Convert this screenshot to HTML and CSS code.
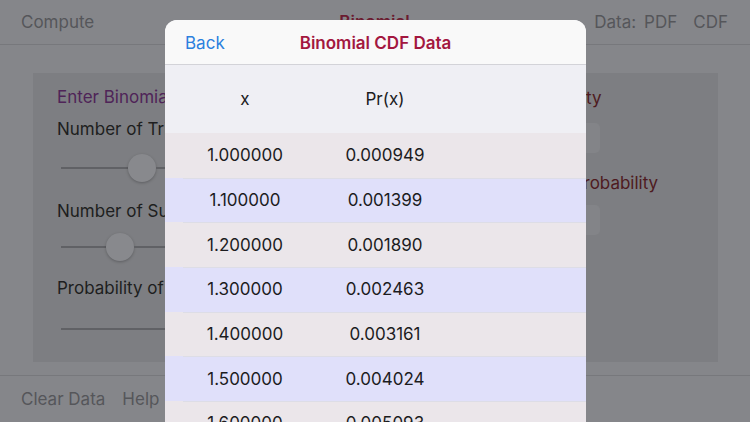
FILE: index.html
```html
<!DOCTYPE html>
<html>
<head>
<link rel="stylesheet" href="styles.css">
</head>
<body>

<div class="app">
  <div class="topbar">
    <div class="bar-left">Compute</div>
    <div class="bar-title">Binomial</div>
    <div class="bar-right"><span>Data:</span><span>PDF</span><span>CDF</span></div>
  </div>

  <div class="main">
    <div class="panel">
      <div class="col-left">
        <div class="heading">Enter Binomial Parameters</div>
        <div class="label first">Number of Trials</div>
        <div class="slider s1">
          <div class="track left"></div><div class="thumb"></div><div class="track"></div>
        </div>
        <div class="label second">Number of Successes</div>
        <div class="slider s2">
          <div class="track left"></div><div class="thumb"></div><div class="track"></div>
        </div>
        <div class="label third">Probability of Success</div>
        <div class="slider s3">
          <div class="track left"></div>
        </div>
      </div>
      <div class="col-right">
        <div class="out-label">PDF Probability</div>
        <div class="out-box first"></div>
        <div class="out-label">Cumulative Probability</div>
        <div class="out-box second"></div>
      </div>
    </div>
  </div>

  <div class="bottombar">
    <span>Clear Data</span>
    <span>Help</span>
  </div>
</div>

<div class="modal">
  <div class="modal-head">
    <div class="back">Back</div>
    <div class="modal-title">Binomial CDF Data</div>
  </div>
  <div class="table-head">
    <div class="cell">x</div>
    <div class="cell">Pr(x)</div>
  </div>
  <div class="rows">
    <div class="row"><div class="cell">1.000000</div><div class="cell">0.000949</div></div>
    <div class="row"><div class="cell">1.100000</div><div class="cell">0.001399</div></div>
    <div class="row"><div class="cell">1.200000</div><div class="cell">0.001890</div></div>
    <div class="row"><div class="cell">1.300000</div><div class="cell">0.002463</div></div>
    <div class="row"><div class="cell">1.400000</div><div class="cell">0.003161</div></div>
    <div class="row"><div class="cell">1.500000</div><div class="cell">0.004024</div></div>
    <div class="row"><div class="cell">1.600000</div><div class="cell">0.005093</div></div>
  </div>
</div>

</body>
</html>
```

FILE: styles.css
```css
body {
  margin: 0;
  width: 750px;
  height: 422px;
  overflow: hidden;
  background-color: #85868a;
  font-family: Inter, "Noto Sans", sans-serif;
  font-size: 17px;
  position: relative;
}

.app {
  display: flex;
  flex-direction: column;
  height: 422px;
}

/* top bar */
.topbar {
  height: 44px;
  border-bottom: 1px solid #77787c;
  display: grid;
  grid-template-columns: 1fr auto 1fr;
  align-items: center;
  padding: 0 22px 0 21px;
  color: #55565a;
}

.bar-title {
  color: #6b1c30;
  font-weight: 600;
}

.bar-right {
  display: flex;
  justify-content: flex-end;
  gap: 8px;
}

.bar-right span + span + span {
  margin-left: 8px;
}

/* panel */
.main {
  padding: 28px 32px 0 33px;
}

.panel {
  height: 289px;
  background-color: #7d7e82;
  display: flex;
}

.col-left {
  width: 445px;
  flex: none;
  padding: 13px 0 0 24px;
  box-sizing: border-box;
  color: #1e1e20;
}

.heading {
  color: #4f2458;
  line-height: 22px;
}

.label {
  line-height: 22px;
}

.label.first { margin-top: 10px; }
.label.second { margin-top: 17px; }
.label.third { margin-top: 15px; }

.slider {
  height: 30px;
  display: flex;
  align-items: center;
  margin-left: 4px;
  margin-top: 13px;
}

.s2 { margin-top: 10px; }
.s3 { margin-top: 15px; }

.track {
  height: 2px;
  background-color: #606165;
  flex: 1;
}

.s1 .track.left { flex: none; width: 67px; }
.s2 .track.left { flex: none; width: 45px; }

.thumb {
  width: 28px;
  height: 28px;
  border-radius: 50%;
  background-color: #88898d;
  box-shadow: 0 1px 3px rgba(0, 0, 0, 0.25);
}

.col-right {
  padding-top: 14px;
  color: #4e1a20;
}

.out-label {
  line-height: 22px;
}

.out-box {
  width: 122px;
  height: 30px;
  border-radius: 5px;
  background-color: #838488;
}

.out-box.first { margin: 14px 0 19px; }
.out-box.second { margin-top: 11px; }

/* bottom bar */
.bottombar {
  margin-top: 13px;
  border-top: 1px solid #77787c;
  height: 45px;
  display: flex;
  align-items: center;
  gap: 17px;
  padding-left: 21px;
  color: #55565a;
}

/* modal sheet */
.modal {
  position: absolute;
  left: 165px;
  top: 20px;
  width: 421px;
  height: 420px;
  border-radius: 12px 12px 0 0;
  overflow: hidden;
  background-color: #efeff4;
}

.modal-head {
  height: 45px;
  background-color: #f9f9f9;
  border-bottom: 1px solid #d3d3d8;
  box-sizing: border-box;
  display: flex;
  align-items: center;
  position: relative;
}

.back {
  color: #2b80de;
  padding-left: 20px;
  padding-top: 2px;
}

.modal-title {
  position: absolute;
  left: 0;
  right: 0;
  top: 13px;
  text-align: center;
  color: #a3173f;
  font-weight: 600;
  pointer-events: none;
}

.table-head {
  height: 68px;
  display: grid;
  grid-template-columns: 140px 140px;
  padding-left: 10px;
  align-items: center;
  color: #1c1c1e;
}

.cell {
  text-align: center;
}

.rows .row {
  height: 44.67px;
  display: grid;
  grid-template-columns: 140px 140px;
  padding-left: 10px;
  align-items: center;
  color: #1c1c1e;
  background-color: #ebe6ea;
  position: relative;
}

.rows .row:nth-child(even) {
  background-color: #e0e0fa;
}

.rows .row + .row::before {
  content: "";
  position: absolute;
  left: 18px;
  right: 0;
  top: 0;
  height: 1px;
  background-color: #dddde6;
}
```
